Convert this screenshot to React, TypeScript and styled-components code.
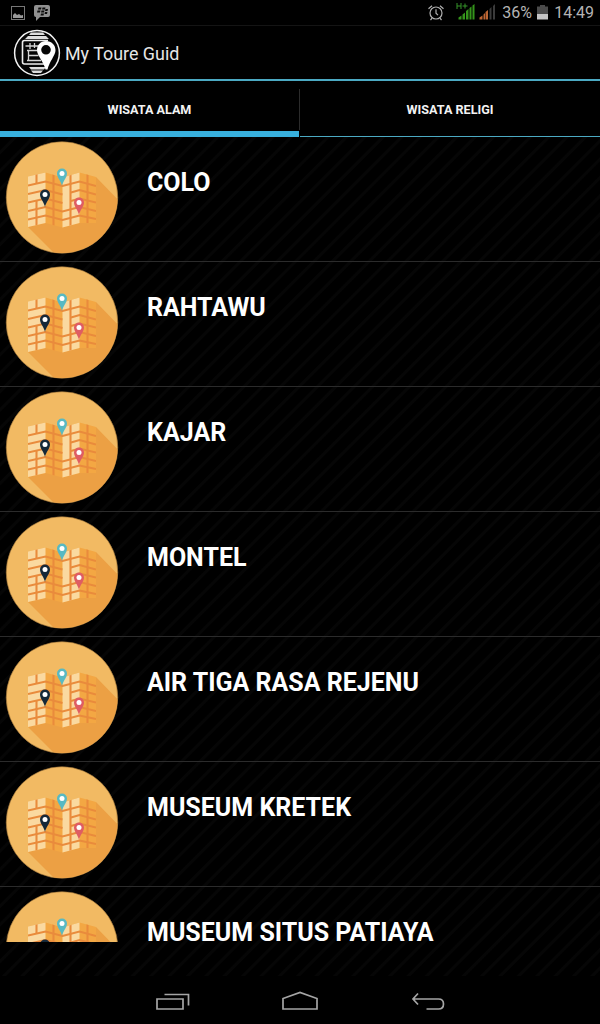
import React from 'react';
import styled, { createGlobalStyle } from 'styled-components';

const GlobalStyle = createGlobalStyle`
  * {
    box-sizing: border-box;
  }

  body {
    margin: 0;
    background: #000;
    font-family: Roboto, sans-serif;
  }

  svg {
    display: block;
    flex: none;
  }
`;

const Screen = styled.div`
  display: flex;
  flex-direction: column;
  width: 600px;
  height: 1024px;
  overflow: hidden;
  background: #000;
  color: #fff;
`;

const StatusBar = styled.div`
  display: flex;
  justify-content: space-between;
  height: 26px;
  padding: 0 6px 0 10px;
  border-bottom: 1px solid #141414;
`;

const StatusGroup = styled.div<{ $gap: number }>`
  display: flex;
  align-items: center;
  gap: ${props => props.$gap}px;
`;

const StatusText = styled.span<{ $width: number }>`
  width: ${props => props.$width}px;
  font-size: 16px;
  line-height: 25px;
  text-align: right;
  color: #b4b4b4;
  white-space: nowrap;
`;

const ActionBar = styled.header`
  display: flex;
  align-items: center;
  gap: 4px;
  height: 55px;
  padding-left: 13px;
  border-bottom: 2px solid #4ba9c2;
`;

const Title = styled.h1`
  margin: 2px 0 0;
  font-size: 17.9px;
  font-weight: 400;
  line-height: 24px;
  color: #e6e6e6;
`;

const Tabs = styled.nav`
  display: grid;
  grid-template-columns: 299px 1px 300px;
  height: 56px;
`;

const Tab = styled.div<{ $active?: boolean }>`
  padding-top: 20px;
  border-bottom: ${props => (props.$active ? '6px solid #38b0dd' : '1px solid #4ba9c2')};
  font-size: 12.6px;
  font-weight: 700;
  line-height: 18px;
  text-align: center;
  color: #f3f3f3;
`;

const TabDivider = styled.div`
  height: 41px;
  margin-top: 8px;
  background: #2b2b2b;
`;

const List = styled.main`
  flex: 1;
  min-height: 0;
  overflow: hidden;
  background: repeating-linear-gradient(135deg, #000 0 9px, #060606 10px 12px, #000 13px);
`;

const Row = styled.div`
  display: flex;
  align-items: flex-start;
  height: 125px;
  padding: 4px 0 0 5px;
  border-bottom: 1px solid #2b2b2b;
`;

const Thumb = styled.div<{ $height: number }>`
  height: ${props => props.$height}px;
  overflow: hidden;
`;

const Name = styled.h2`
  margin: 25px 0 0 28px;
  font-size: 25px;
  font-weight: 700;
  line-height: 34px;
  white-space: nowrap;
`;

const NavBar = styled.footer`
  display: flex;
  justify-content: center;
  gap: 86px;
  height: 48px;
  padding-top: 12px;
`;

const GalleryIcon = () => (
  <svg width="16" height="16" viewBox="0 0 16 16">
    <rect x="1.5" y="1.5" width="13" height="13" fill="none" stroke="#777" strokeWidth="1" />
    <path d="M3 13V10l2-2 2 2 2-1 2 1.500 2-.5v3z" fill="#999" />
  </svg>
);

const MessengerIcon = () => (
  <svg width="18" height="18" viewBox="0 0 18 18">
    <path d="M3 1h12q2 0 2 2v8q0 2-2 2H7l-4 4v-4q-2 0-2-2V3q0-2 2-2z" fill="#909090" />
    <path
      d="M5.500 3.500h3l-.5 2H5zM9.500 3.500h3l-.5 2H9zM4.500 6.500h3l-.5 2H4zM8.500 6.500h3l-.5 2H8zM12.500 5h2.500l-.5 2H12zM12 8h2.500l-.5 2h-2.500zM8 9.500h3l-.5 2h-3z"
      fill="#0c0c0c"
    />
  </svg>
);

const AlarmIcon = () => (
  <svg width="18" height="18" viewBox="0 0 18 18" fill="none" stroke="#b0b0b0" strokeWidth="1.200">
    <circle cx="9" cy="9" r="6" />
    <path d="M9 5.200v4l2 2M1.500 4.700l3.500-3M16.500 4.700L13 1.700M5 14.200L3.500 16M13 14.200l1.500 1.800" />
  </svg>
);

const SignalIcon = () => (
  <svg width="40" height="20" viewBox="0 0 40 20">
    <path d="M1 0v6M5 0v6M1 3h4M6.500 3h5M9 .5v5" fill="none" stroke="#37952a" strokeWidth="1" />
    <path
      d="M2.500 16.500v-2l3-2v4zM6.500 16.500v-5l2.500-2v7zM10 16.500v-8.500l2.500-2v10.500zM13.500 16.500V5l2-1.500v13zM16.500 16.500V2.500l2-1.500v15.500z"
      fill="#35951b"
    />
    <path d="M23.500 16.500v-2l3-2v4zM27.500 16.500v-5l1.500-1.500v6.500zM29.500 16.500v-7.500l2.500-2v9.500z" fill="#bd6634" />
    <path d="M33.500 16.500V6l2-2v12.500zM37 16.500V3l2-2v15.500z" fill="#3b3b3b" />
  </svg>
);

const BatteryIcon = () => (
  <svg width="11" height="16" viewBox="0 0 11 16">
    <path d="M3 0h5v1.500h3V10H0V1.500h3z" fill="#4b4b4b" />
    <path d="M0 9h11v5.500H0z" fill="#c5c5c5" />
  </svg>
);

const Logo = () => (
  <svg width="48" height="48" viewBox="0 0 48 48">
    <circle cx="24" cy="24" r="22.400" fill="#050505" stroke="#f3f3f3" strokeWidth="1.500" />
    <path
      d="M18 3.500h12l2 2.500H16zM15 7h18l3 3H12zM16 38h17l-2 2.500H18zM18 41.500h12l-2 2.500h-8z"
      fill="#ddd"
    />
    <path d="M35 11.500H11.500q-2 0-2 2V33q0 2 2 2h24" fill="none" stroke="#eee" strokeWidth="1.600" />
    <path
      d="M12.500 17h13M17 14v6M14 21.500h11M15.500 21.500v10M15.500 26.500h10M14 31.500h14M21.500 14v5"
      fill="none"
      stroke="#d5d5d5"
      strokeWidth="1.300"
    />
    <path
      fillRule="evenodd"
      d="M33 12c5.500 0 9.500 4 9.500 9.300 0 5-6 11-8 19.200h-2c-2-8-8.500-14-8.500-19.200C24 16 27.500 12 33 12zm0 4a4.800 4.800 0 1 0 0 9.600 4.800 4.800 0 0 0 0-9.600z"
      fill="#fff"
    />
  </svg>
);

const Pin = ({ x, y, color }: { x: number; y: number; color: string }) => (
  <g transform={`translate(${x} ${y})`}>
    <path d="M0 12.500C-.8 8-5 4-5 0a5 5 0 0 1 10 0C5 4 .8 8 0 12.500z" fill={color} />
    <circle r="2.500" fill="#fff" />
  </g>
);

const MapIcon = () => (
  <svg width="114" height="114" viewBox="0 0 114 114">
    <defs>
      <clipPath id="disc">
        <circle cx="57" cy="56.500" r="55.500" />
      </clipPath>
      <clipPath id="sheet">
        <path d="M23 35.500L40.500 31.500 57.500 36.500 74.500 31.500 91 36V82L74.500 82 57.500 86.500 40.500 82 23 86z" />
      </clipPath>
    </defs>
    <circle cx="57" cy="56.500" r="55.800" fill="#f2ba63" stroke="#9a7137" strokeWidth=".6" />
    <path clipPath="url(#disc)" d="M91 36L120 66V120H57L23 86z" fill="#eca044" />
    <g clipPath="url(#sheet)">
      <rect x="23" y="30" width="68" height="58" fill="#f3a743" />
      <path d="M23 30h17.500v58H23zM57.500 30h17v58h-17z" fill="#fad9a0" />
      <g fill="none" stroke="#e98b3c" strokeWidth="2.100">
        <path d="M23 44.500l17.500-4 17 4.500 17-4.500L91 45M23 53l17.500-4 17 4.500M66 51.500l8.500-2.500L91 53.500M23 61.500l17.500-4 17 4.500M66 60l8.500-2.500L91 61.500M23 70l17.500-4 17 4.500 17-4.500L91 70M23 78.500l17.500-4 17 4.500 17-4.500L91 78" />
        <path d="M31.500 32v11M31.500 60v26M48.500 32v53M65.500 32v55M82.500 32v52" />
      </g>
    </g>
    <Pin x={57} y={32.500} color="#58b9c2" />
    <Pin x={40} y={53.500} color="#152838" />
    <Pin x={74} y={61.500} color="#df5d63" />
  </svg>
);

const NavIcon = ({ d }: { d: string }) => (
  <svg width="42" height="26" viewBox="0 0 42 26" fill="none" stroke="#a5a5a5" strokeWidth="1.700">
    <path d={d} />
  </svg>
);

const places = [
  'COLO',
  'RAHTAWU',
  'KAJAR',
  'MONTEL',
  'AIR TIGA RASA REJENU',
  'MUSEUM KRETEK',
  'MUSEUM SITUS PATIAYA',
];

export default function App() {
  return (
    <Screen>
      <GlobalStyle />
      <StatusBar>
        <StatusGroup $gap={7}>
          <GalleryIcon />
          <MessengerIcon />
        </StatusGroup>
        <StatusGroup $gap={0}>
          <StatusGroup $gap={11}>
            <AlarmIcon />
            <SignalIcon />
          </StatusGroup>
          <StatusGroup $gap={5}>
            <StatusText $width={36}>36%</StatusText>
            <BatteryIcon />
            <StatusText $width={41}>14:49</StatusText>
          </StatusGroup>
        </StatusGroup>
      </StatusBar>

      <ActionBar>
        <Logo />
        <Title>My Toure Guid</Title>
      </ActionBar>

      <Tabs>
        <Tab $active>WISATA ALAM</Tab>
        <TabDivider />
        <Tab>WISATA RELIGI</Tab>
      </Tabs>

      <List>
        {places.map((place, i) => (
          <Row key={place}>
            {/* the last thumbnail is only partly loaded */}
            <Thumb $height={i === places.length - 1 ? 51 : 114}>
              <MapIcon />
            </Thumb>
            <Name>{place}</Name>
          </Row>
        ))}
      </List>

      <NavBar>
        <NavIcon d="M6 11h26v10H6zM13.500 6.500h24v11" />
        <NavIcon d="M4 21V10.500L21 4.500l17 6v10.500z" />
        <NavIcon d="M11 5.500L6 11l5 5.500M6 11h25.500q5 0 5 5t-5 5H19.500" />
      </NavBar>
    </Screen>
  );
}
